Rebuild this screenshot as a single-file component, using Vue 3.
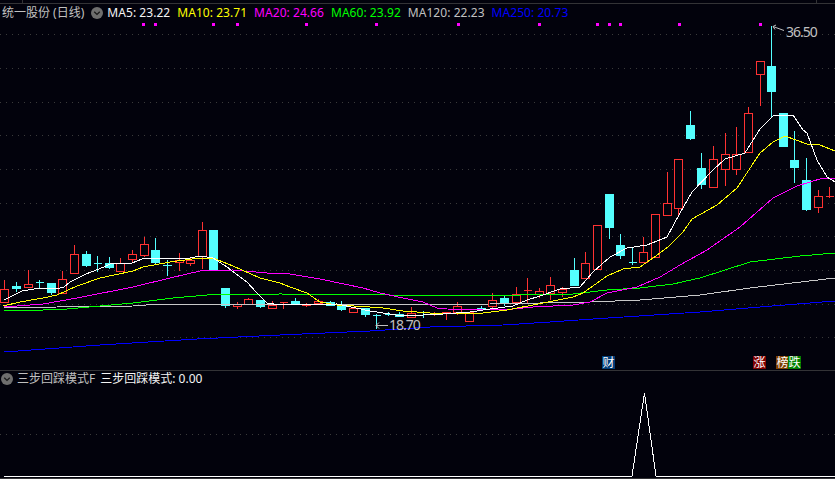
<script setup>
// index -> x position on the time axis
const xOf = (i) => Math.round(4.3 + 11.62 * i)

// [index, high, bodyTop, bodyBottom, low, isUp]
const rawCandles = [
  [0, 280, 289, 302, 302, 1], [1, 282, 286, 289, 292, 0], [2, 270, 284, 287, 288, 1],
  [3, 280, 282, 282, 289, 0], [4, 283, 283, 293, 295, 0], [5, 271, 279, 293, 293, 1],
  [6, 245, 254, 273, 273, 1], [7, 251, 254, 266, 267, 0], [8, 256, 263, 263, 272, 0],
  [9, 257, 263, 268, 269, 0], [10, 258, 263, 271, 271, 1], [11, 250, 254, 259, 263, 1],
  [12, 237, 244, 255, 257, 1], [13, 238, 250, 263, 264, 0], [14, 260, 265, 266, 276, 0],
  [15, 253, 260, 262, 271, 1], [16, 258, 260, 263, 266, 1], [17, 222, 230, 256, 269, 1],
  [18, 230, 230, 271, 271, 0], [19, 288, 288, 306, 308, 0], [20, 302, 304, 306, 309, 1],
  [21, 298, 299, 304, 304, 1], [22, 300, 300, 307, 308, 0], [23, 301, 305, 308, 308, 1],
  [24, 302, 302, 302, 309, 1], [25, 298, 301, 304, 304, 0], [26, 303, 304, 305, 307, 1],
  [27, 299, 301, 303, 303, 1], [28, 301, 302, 306, 306, 0], [29, 301, 305, 310, 311, 0],
  [30, 307, 308, 312, 313, 1], [31, 308, 308, 315, 317, 0], [32, 314, 315, 315, 329, 0],
  [33, 312, 314, 314, 316, 0], [34, 312, 314, 317, 317, 0], [35, 307, 313, 317, 318, 1],
  [36, 311, 312, 312, 318, 0], [37, 312, 314, 314, 316, 1], [38, 312, 312, 313, 320, 1],
  [39, 302, 306, 312, 315, 1], [40, 312, 312, 321, 321, 1], [41, 306, 308, 309, 309, 0],
  [42, 293, 300, 306, 308, 1], [43, 296, 298, 303, 306, 0], [44, 287, 294, 302, 304, 1],
  [45, 278, 290, 290, 304, 1], [46, 288, 291, 294, 298, 1], [47, 277, 285, 293, 300, 1],
  [48, 287, 289, 292, 297, 1], [49, 258, 270, 286, 286, 0], [50, 252, 263, 278, 278, 1],
  [51, 225, 225, 269, 269, 1], [52, 194, 194, 228, 239, 0], [53, 234, 245, 256, 259, 0],
  [54, 247, 262, 262, 265, 0], [55, 237, 252, 262, 262, 1], [56, 214, 214, 257, 257, 1],
  [57, 172, 203, 215, 215, 1], [58, 159, 159, 208, 217, 1], [59, 111, 125, 139, 140, 0],
  [60, 153, 168, 185, 189, 0], [61, 146, 159, 187, 187, 1], [62, 133, 154, 169, 186, 1],
  [63, 127, 154, 169, 175, 1], [64, 107, 113, 152, 152, 1], [65, 61, 61, 74, 106, 1],
  [66, 26, 66, 92, 117, 0], [67, 113, 113, 147, 147, 0], [68, 131, 160, 168, 183, 0],
  [69, 158, 180, 210, 211, 0], [70, 190, 196, 207, 213, 1], [71, 187, 196, 196, 198, 1],
]

const candles = rawCandles.map(([i, high, top, bottom, low, up]) => ({
  x: xOf(i) + 0.5,
  high,
  top,
  bottom,
  low,
  up: !!up,
}))

const maLines = [
  {
    color: '#0000ff',
    points: '4,352 100,345 197,339 280,335 370,331 430,327 503,325 550,322 593,319 700,312 760,307 835,301',
  },
  {
    color: '#c8c8c8',
    points: '4,308 57,307 133,306 160,304 280,304 383,305 490,304 540,303 590,302 640,300 700,295 750,288 835,278',
  },
  {
    color: '#00ff00',
    points: '4,311 10,310 43,310 67,309 100,306 133,303 173,298 207,295 280,294 390,295 490,296 550,294 573,294 607,290 640,288 673,284 700,278 750,262 800,256 835,253',
  },
  {
    color: '#ff00ff',
    points: '4,307 43,304 77,298 133,287 170,278 200,271 233,270 267,273 290,274 320,279 363,288 380,293 403,298 423,302 437,308 447,309 503,310 533,307 573,305 590,302 607,293 637,287 660,277 680,265 707,250 740,227 773,198 797,186 823,178 835,178',
  },
  {
    color: '#ffff00',
    points: '3,306 20,302 43,298 57,295 77,286 100,278 133,271 143,267 170,262 200,258 213,258 233,266 260,278 280,283 290,287 307,293 320,302 337,305 370,307 383,308 403,311 430,313 483,313 507,310 533,305 573,297 583,293 607,276 623,269 640,267 653,258 668,247 683,232 692,219 717,205 737,188 760,153 773,142 785,136 807,144 820,145 835,151',
  },
  {
    color: '#ffffff',
    points: '4,300 12,296 22,291 34,289 60,288 64,287 70,282 86,274 104,267 110,264 132,263 142,259 155,258 190,258 200,256 213,258 227,267 247,282 257,293 267,303 280,305 337,304 370,311 383,313 403,316 443,314 470,312 490,309 513,306 527,300 540,296 560,289 580,287 593,272 610,257 627,248 647,245 667,237 680,213 692,192 713,170 725,159 745,153 760,129 773,116 793,115 803,130 807,133 817,160 827,177 835,182',
  },
]

const gridRows = [34, 68, 102, 135, 169, 203, 236, 270, 304, 337]
const signalDots = [142, 154, 212, 236, 305, 375, 457, 538, 596, 608, 619, 678, 759]

const maLegend = [
  { label: 'MA5', value: '23.22', color: '#f4f4f4' },
  { label: 'MA10', value: '23.71', color: '#ffff00' },
  { label: 'MA20', value: '24.66', color: '#ff00ff' },
  { label: 'MA60', value: '23.92', color: '#00ff00' },
  { label: 'MA120', value: '22.23', color: '#c0c0c0' },
  { label: 'MA250', value: '20.73', color: '#0000ff' },
]

const events = [
  { text: '财', kind: 'event--blue', left: 602 },
  { text: '涨', kind: 'event--red', left: 753 },
  { text: '榜', kind: 'event--brown', left: 776 },
  { text: '跌', kind: 'event--green', left: 788 },
]
</script>

<template>
  <div class="terminal">
    <section class="panel panel--main">
      <svg class="chart" width="835" height="370" viewBox="0 0 835 370">
        <line x1="0" y1="3.5" x2="835" y2="3.5" class="rule" />
        <line x1="22.5" y1="0" x2="22.5" y2="3" class="rule" />
        <line x1="816.5" y1="0" x2="816.5" y2="3" class="rule" />
        <line
          v-for="y in gridRows"
          :key="y"
          x1="0"
          x2="835"
          :y1="y + 0.5"
          :y2="y + 0.5"
          class="grid"
        />
        <rect
          v-for="x in signalDots"
          :key="x"
          :x="x"
          y="23"
          width="3"
          height="3"
          fill="#ff00ff"
        />
        <g v-for="c in candles" :key="c.x" class="candle">
          <template v-if="c.up">
            <line :x1="c.x" :x2="c.x" :y1="c.high" :y2="c.top" class="wick-up" />
            <line :x1="c.x" :x2="c.x" :y1="c.bottom" :y2="c.low" class="wick-up" />
            <line
              v-if="c.top === c.bottom"
              :x1="c.x - 4"
              :x2="c.x + 4"
              :y1="c.top + 0.5"
              :y2="c.top + 0.5"
              class="wick-up"
            />
            <rect
              v-else
              :x="c.x - 4"
              :y="c.top + 0.5"
              width="8"
              :height="c.bottom - c.top"
              class="body-up"
            />
          </template>
          <template v-else>
            <line :x1="c.x" :x2="c.x" :y1="c.high" :y2="c.low" class="wick-down" />
            <line
              v-if="c.top === c.bottom"
              :x1="c.x - 4"
              :x2="c.x + 4"
              :y1="c.top + 0.5"
              :y2="c.top + 0.5"
              class="wick-down"
            />
            <rect
              v-else
              :x="c.x - 4.5"
              :y="c.top"
              width="9"
              :height="c.bottom - c.top"
              class="body-down"
            />
          </template>
        </g>
        <polyline
          v-for="line in maLines"
          :key="line.color"
          :points="line.points"
          :stroke="line.color"
          class="ma"
        />
        <path d="M773 26.5L784 30.5M773 26.5L776 25M773 26.5L775 29.5" class="pointer" />
        <path d="M376 325.5H388M376 325.5L379 322.5M376 325.5L379 328.5" class="pointer" />
      </svg>

      <header class="legend">
        <span class="legend__name">统一股份 (日线)</span>
        <span class="toggle">
          <svg width="12" height="12" viewBox="0 0 13 13">
            <circle cx="6.5" cy="6.5" r="6.5" fill="#6e6e6e" />
            <path d="M3.5 5.2L6.5 8L9.5 5.2" fill="none" stroke="#1a1a1a" stroke-width="1.5" />
          </svg>
        </span>
        <ul class="legend__values">
          <li v-for="ma in maLegend" :key="ma.label" :style="{ color: ma.color }">
            {{ ma.label }}: {{ ma.value }}
          </li>
        </ul>
      </header>

      <span class="price price--high">36.50</span>
      <span class="price price--low">18.70</span>
      <span
        v-for="e in events"
        :key="e.text"
        class="event"
        :class="e.kind"
        :style="{ left: e.left + 'px' }"
      >{{ e.text }}</span>
    </section>

    <section class="panel panel--sub">
      <svg class="chart" width="835" height="108" viewBox="0 0 835 108">
        <line x1="0" x2="835" y1="63.5" y2="63.5" class="grid" />
        <polyline
          points="4,105 632,105 644.5,22 656,105 835,105"
          stroke="#ffffff"
          class="ma"
        />
        <line x1="0" x2="835" y1="107.5" y2="107.5" class="rule" />
      </svg>
      <header class="legend legend--sub">
        <span class="toggle">
          <svg width="12" height="12" viewBox="0 0 13 13">
            <circle cx="6.5" cy="6.5" r="6.5" fill="#6e6e6e" />
            <path d="M3.5 5.2L6.5 8L9.5 5.2" fill="none" stroke="#1a1a1a" stroke-width="1.5" />
          </svg>
        </span>
        <span class="legend__name">三步回踩模式F</span>
        <span class="legend__value">三步回踩模式: 0.00</span>
      </header>
    </section>
  </div>
</template>

<style>
html,
body {
  background: #02020c;
}
</style>

<style scoped>
.terminal {
  width: 835px;
  height: 479px;
  display: flex;
  flex-direction: column;
  overflow: hidden;
  background: #02020c;
  font-family: "Noto Sans", "Noto Sans CJK SC", sans-serif;
  font-size: 12px;
}

.panel {
  position: relative;
}

.panel--main {
  height: 370px;
  border-bottom: 1px solid #333336;
}

.panel--sub {
  flex: 1;
}

.chart {
  position: absolute;
  top: 0;
  left: 0;
  display: block;
}

.rule {
  stroke: #333336;
  stroke-width: 1;
  shape-rendering: crispEdges;
}

.grid {
  stroke: #3a3a3a;
  stroke-width: 1;
  stroke-dasharray: 1 5;
  shape-rendering: crispEdges;
}

.wick-up,
.wick-down,
.body-up,
.body-down {
  shape-rendering: crispEdges;
}

.wick-up {
  stroke: #ff3232;
}

.wick-down {
  stroke: #54ffff;
}

.body-up {
  fill: #02020c;
  stroke: #ff3232;
}

.body-down {
  fill: #54ffff;
}

.ma {
  fill: none;
  stroke-width: 1;
  shape-rendering: crispEdges;
}

.pointer {
  fill: none;
  stroke: #c0c0c0;
  stroke-width: 1;
}

.legend {
  position: absolute;
  top: 4px;
  left: 2px;
  display: flex;
  align-items: center;
  height: 18px;
  white-space: nowrap;
  line-height: 18px;
}

.legend--sub {
  top: -1px;
  left: 1px;
}

.legend__name {
  color: #c0c0c0;
}

.legend__value {
  margin-left: 5px;
  color: #f4f4f4;
}

.toggle {
  display: flex;
  margin: 0 4px 0 7px;
}

.legend--sub .toggle {
  margin: 0 4px 0 0;
}

.legend__values {
  display: flex;
  gap: 7px;
  margin: 0;
  padding: 0;
  letter-spacing: 0.05px;
  list-style: none;
}

.price {
  position: absolute;
  color: #c0c0c0;
  font-size: 14px;
  letter-spacing: -1px;
  line-height: 14px;
}

.price--high {
  top: 25px;
  left: 786px;
}

.price--low {
  top: 318px;
  left: 389px;
}

.event {
  position: absolute;
  top: 356px;
  width: 13px;
  height: 13px;
  color: #ffffff;
  font-size: 12px;
  line-height: 13px;
  text-align: center;
}

.event--blue {
  background: #003c78;
}

.event--red {
  background: #800000;
}

.event--brown {
  background: #804000;
}

.event--green {
  background: #007f00;
}
</style>
